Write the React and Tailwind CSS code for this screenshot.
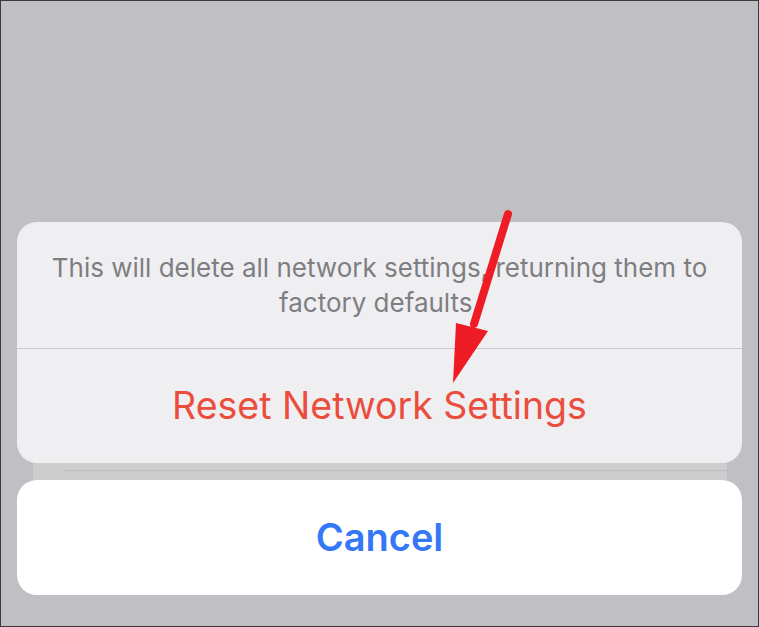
import React from "react";

export default function App() {
  return (
    <div className="relative w-[759px] h-[627px] border border-[#3a3a3c] bg-[#c0bfc4] overflow-hidden" style={{ fontFamily: "Inter, 'Liberation Sans', sans-serif" }}>
      <div className="flex flex-col pt-[221px] px-[16px]">
        <div className="h-[241px] rounded-[20px] bg-[#efeff1] flex flex-col">
          <div className="h-[126px] flex items-center justify-center text-center text-[26px] leading-[35px] text-[#7e7e82] px-4">
            <p>This will delete all network settings, returning them to<br />factory defaults.</p>
          </div>
          <div className="h-px bg-[#c8c8cc]" />
          <div className="flex-1 flex items-center justify-center text-[37.5px] text-[#eb4d3d]">
            Reset Network Settings
          </div>
        </div>
        <div className="mx-[16px] mr-[15px] h-[17px] bg-[#cdcdcd] pt-[7px] pl-[32px]">
          <div className="h-px bg-[#bdbdbd]" />
        </div>
        <div className="h-[115px] rounded-[20px] bg-white flex items-center justify-center text-[38px] font-semibold text-[#3478f6]">
          Cancel
        </div>
      </div>
      <svg className="absolute left-0 top-0" width="759" height="627" viewBox="-1 -1 759 627">
        <line x1="506" y1="212" x2="472" y2="322" stroke="#ee1c25" strokeWidth="8" strokeLinecap="round" />
        <polygon points="451,381 454,321 486,329" fill="#ee1c25" />
      </svg>
    </div>
  );
}
